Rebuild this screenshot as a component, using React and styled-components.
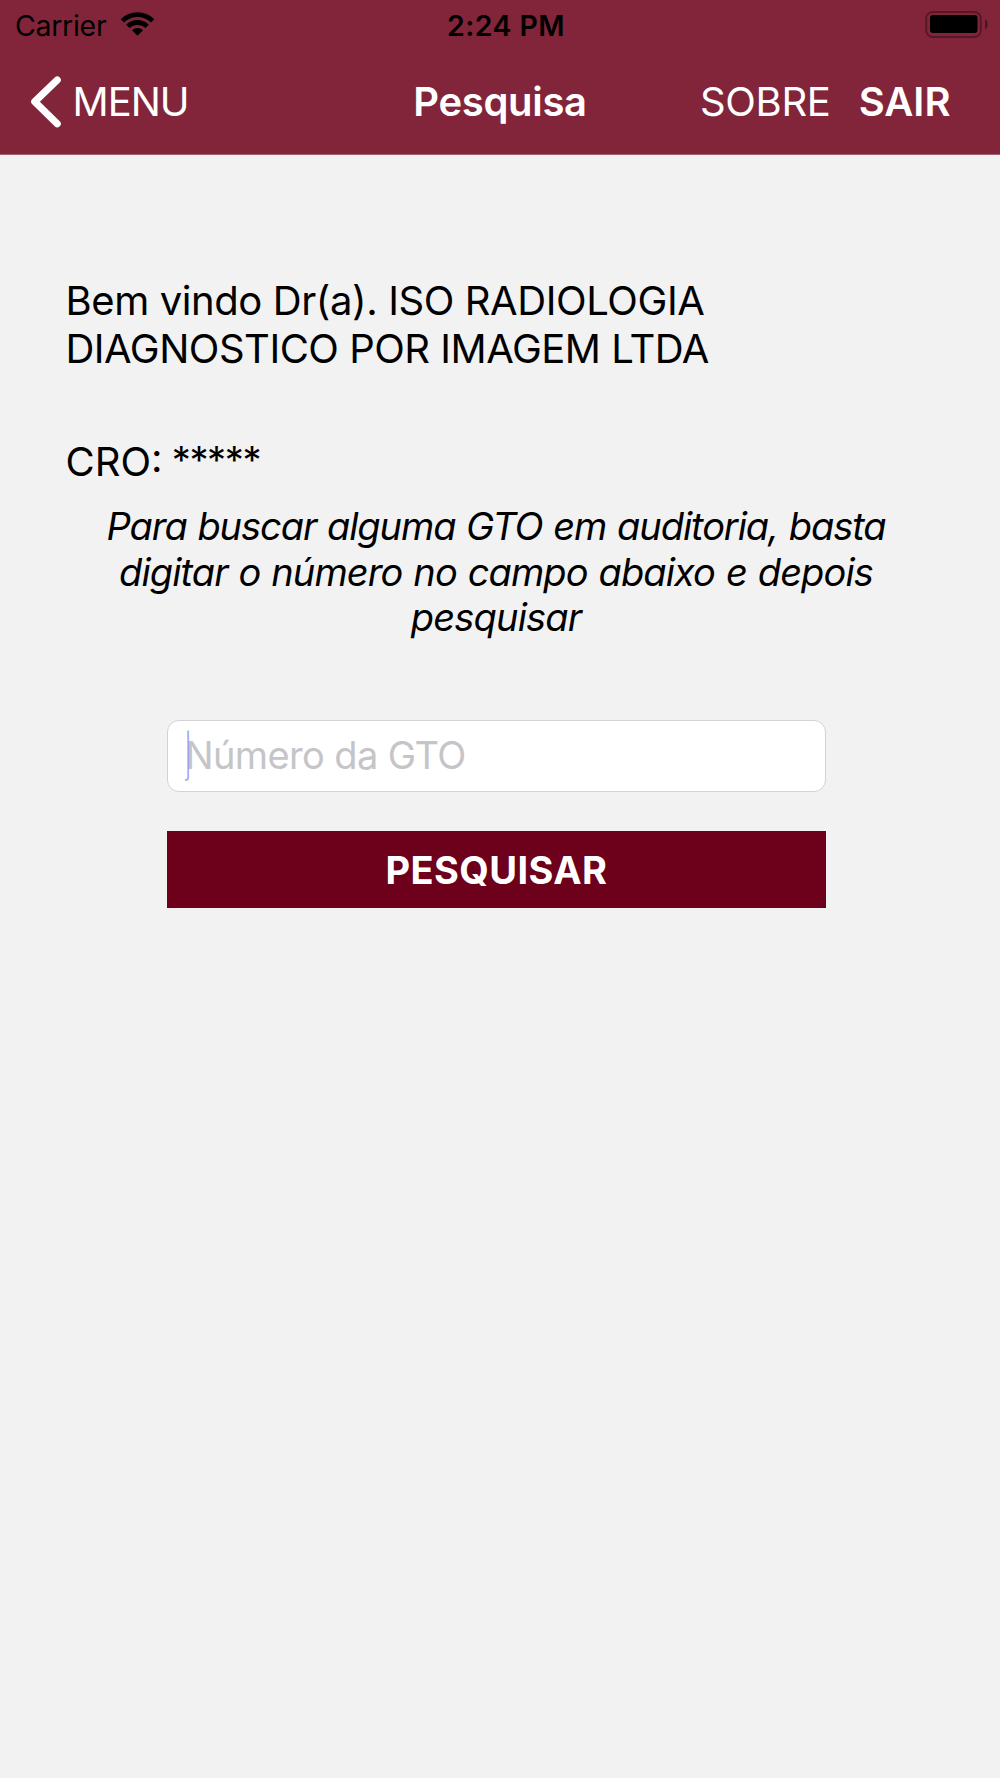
import styled, { createGlobalStyle } from "styled-components";

const GlobalStyle = createGlobalStyle`
  * {
    box-sizing: border-box;
  }

  body {
    margin: 0;
    background-color: #f2f2f2;
    font-family: Inter, "Liberation Sans", sans-serif;
    -webkit-font-smoothing: antialiased;
  }
`;

const Screen = styled.div`
  width: 1000px;
  height: 1778px;
  display: flex;
  flex-direction: column;
  background-color: #f2f2f2;
  color: black;
  overflow: hidden;
`;

const Header = styled.header`
  height: 155px;
  background-color: #82253b;
  border-bottom: 1px solid #a35d6c;
`;

const StatusBar = styled.div`
  height: 50px;
  display: grid;
  grid-template-columns: 1fr auto 1fr;
  padding: 0 11px 0 15px;
  line-height: 51px;
`;

const CarrierArea = styled.div`
  display: flex;
  font-size: 28.5px;
  letter-spacing: -0.3px;
`;

const Clock = styled.div`
  padding-left: 8px;
  font-size: 28.5px;
  font-weight: 600;
  letter-spacing: 0.4px;
`;

const BatteryArea = styled.div`
  display: flex;
  justify-content: flex-end;
`;

const NavBar = styled.nav`
  height: 104px;
  display: grid;
  grid-template-columns: 1fr auto 1fr;
  padding: 0 30px;
  line-height: 103px;
`;

const NavSide = styled.div`
  display: flex;
  justify-content: ${props => (props.$end ? "flex-end" : "flex-start")};
  padding-right: ${props => (props.$end ? "19.5px" : "0")};
`;

const NavText = styled.span`
  font-size: 40px;
  font-weight: ${props => props.$weight || 400};
  letter-spacing: ${props => props.$spacing || "0"};
  margin-left: ${props => props.$gap || "0"};
  color: white;
  white-space: nowrap;
`;

const Content = styled.main`
  padding-top: 122px;
`;

const InfoText = styled.p`
  margin: 0 0 ${props => props.$after};
  padding-left: 65.5px;
  font-size: 40px;
  line-height: 48px;
  white-space: nowrap;
`;

const Line = styled.span`
  display: block;
  letter-spacing: ${props => props.$spacing};
`;

const Masked = styled.span`
  margin-left: -2px;
  font-size: 38px;
  line-height: 1;
  letter-spacing: -1.4px;
  vertical-align: 2px;
`;

const Hint = styled.p`
  margin: 0 0 79px;
  padding-right: 8px;
  font-size: 38px;
  line-height: 45.7px;
  font-style: italic;
  text-align: center;
  word-spacing: 1.1px;
`;

const Form = styled.div`
  width: 659px;
  margin-left: 167px;
`;

const Field = styled.div`
  position: relative;
  height: 72px;
  padding-left: 17px;
  border: 1px solid #d3d3d3;
  border-radius: 12px;
  background-color: white;
  font-size: 38px;
  line-height: 69.5px;
  letter-spacing: -0.62px;
  color: #c5c5c9;
`;

const Caret = styled.svg`
  position: absolute;
  left: 16px;
  top: 9px;
`;

const SearchButton = styled.button`
  display: block;
  width: 100%;
  height: 77px;
  margin-top: 39px;
  padding: 0;
  border: 0;
  background-color: #6d001a;
  font-family: inherit;
  font-size: 38px;
  font-weight: 700;
  line-height: 78px;
  letter-spacing: 0.4px;
  color: white;
`;

const WifiWrapper = styled.div`
  display: flex;
  padding-top: 11px;
  margin-left: 14px;
  line-height: 0;
`;

const WifiIcon = () => (
  <svg width="35" height="26" viewBox="0 0 35 26">
    <path d="M0.7 8.2 A24 24 0 0 1 34.3 8.2 L31 11.5 A19.3 19.3 0 0 0 4 11.5 Z" />
    <path d="M6.2 13.7 A16.2 16.2 0 0 1 28.8 13.7 L25.4 17.1 A11.3 11.3 0 0 0 9.6 17.1 Z" />
    <path d="M12 19.3 A8 8 0 0 1 23 19.3 L17.5 24.8 Z" />
  </svg>
);

const BatteryIcon = () => (
  <svg width="64" height="50" viewBox="0 0 64 50">
    <rect x="1.2" y="12" width="54.6" height="25" rx="6.5" fill="none" stroke="#561827" strokeWidth="2" />
    <rect x="5" y="15" width="47.5" height="18" rx="3" />
    <path d="M60 19 C63.7 21 63.7 27.5 60 29.5 Z" fill="#4b1522" />
  </svg>
);

const BackIcon = () => (
  <svg width="32" height="104" viewBox="0 0 32 104">
    <path d="M27.2 30 L4.8 51.7 L27.2 73.7" fill="none" stroke="white" strokeWidth="7.2" strokeLinecap="round" strokeLinejoin="round" />
  </svg>
);

const App = () => {
  return (
    <>
      <GlobalStyle />
      <Screen>
        <Header>
          <StatusBar>
            <CarrierArea>
              Carrier
              <WifiWrapper>
                <WifiIcon />
              </WifiWrapper>
            </CarrierArea>
            <Clock>2:24 PM</Clock>
            <BatteryArea>
              <BatteryIcon />
            </BatteryArea>
          </StatusBar>
          <NavBar>
            <NavSide>
              <BackIcon />
              <NavText $gap="10.5px" $spacing="-1px">MENU</NavText>
            </NavSide>
            <NavText $weight={600} $spacing="-0.3px">Pesquisa</NavText>
            <NavSide $end>
              <NavText $spacing="-0.3px">SOBRE</NavText>
              <NavText $weight={600} $gap="28px">SAIR</NavText>
            </NavSide>
          </NavBar>
        </Header>
        <Content>
          <InfoText $after="65px">
            <Line $spacing="-0.41px">Bem vindo Dr(a). ISO RADIOLOGIA</Line>
            <Line $spacing="-0.5px">DIAGNOSTICO POR IMAGEM LTDA</Line>
          </InfoText>
          <InfoText $after="18px">
            CRO: <Masked>*****</Masked>
          </InfoText>
          <Hint>
            <Line $spacing="-1.07px">Para buscar alguma GTO em auditoria, basta</Line>
            <Line $spacing="-0.9px">digitar o número no campo abaixo e depois</Line>
            <Line $spacing="-0.8px">pesquisar</Line>
          </Hint>
          <Form>
            <Field>
              Número da GTO
              <Caret width="6" height="52" viewBox="0 0 6 52">
                <path d="M4.2 0.5 V48 Q4.2 50 1 50" fill="none" stroke="#8397f0" strokeOpacity="0.75" strokeWidth="1.8" />
              </Caret>
            </Field>
            <SearchButton>PESQUISAR</SearchButton>
          </Form>
        </Content>
      </Screen>
    </>
  );
};

export default App;
